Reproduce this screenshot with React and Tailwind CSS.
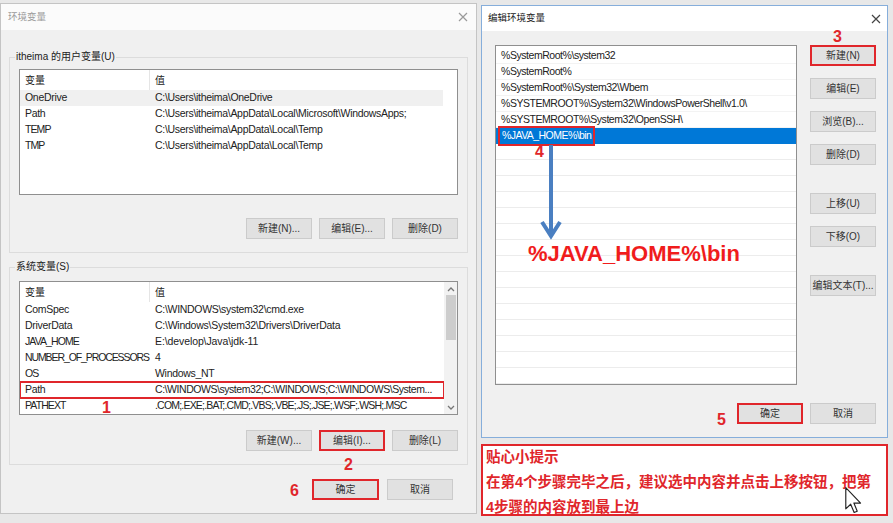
import React from 'react'

const CAPS = 'tracking-[-0.9px]'
const MIXED = 'tracking-[-0.3px]'

const userVars = [
  ['OneDrive', 'C:\\Users\\itheima\\OneDrive', MIXED],
  ['Path', 'C:\\Users\\itheima\\AppData\\Local\\Microsoft\\WindowsApps;', MIXED],
  ['TEMP', 'C:\\Users\\itheima\\AppData\\Local\\Temp', CAPS],
  ['TMP', 'C:\\Users\\itheima\\AppData\\Local\\Temp', CAPS],
]

const sysVars = [
  ['ComSpec', 'C:\\WINDOWS\\system32\\cmd.exe', MIXED, 'tracking-[-0.3px]'],
  ['DriverData', 'C:\\Windows\\System32\\Drivers\\DriverData', MIXED, 'tracking-[-0.25px]'],
  ['JAVA_HOME', 'E:\\develop\\Java\\jdk-11', CAPS, 'tracking-[-0.1px]'],
  ['NUMBER_OF_PROCESSORS', '4', 'tracking-[-1.1px]', ''],
  ['OS', 'Windows_NT', CAPS, 'tracking-[-0.3px]'],
  ['Path', 'C:\\WINDOWS\\system32;C:\\WINDOWS;C:\\WINDOWS\\System...', MIXED, 'tracking-[-0.45px]'],
  ['PATHEXT', '.COM;.EXE;.BAT;.CMD;.VBS;.VBE;.JS;.JSE;.WSF;.WSH;.MSC', CAPS, 'tracking-[-0.8px]'],
]

const pathEntries = [
  '%SystemRoot%\\system32',
  '%SystemRoot%',
  '%SystemRoot%\\System32\\Wbem',
  '%SYSTEMROOT%\\System32\\WindowsPowerShell\\v1.0\\',
  '%SYSTEMROOT%\\System32\\OpenSSH\\',
]

function CloseX({ className = '' }) {
  return (
    <svg width="10" height="10" viewBox="0 0 10 10" className={className}>
      <path d="M1 1L9 9M9 1L1 9" stroke="currentColor" strokeWidth="1.2" />
    </svg>
  )
}

function Btn({ children, red, className = '' }) {
  return (
    <div
      className={`h-[21px] w-[66px] shrink-0 flex items-center justify-center whitespace-nowrap text-[10px] text-[#333] bg-[#e1e1e1] ${
        red ? 'border-2 border-[#e0262b]' : 'border border-[#cbcbcb]'
      } ${className}`}
    >
      {children}
    </div>
  )
}

function Num({ n, className }) {
  return (
    <span className={`absolute text-[16px] leading-[20px] font-bold text-[#e0262b] ${className}`}>{n}</span>
  )
}

function VarHeader() {
  return (
    <div className="flex h-[20px] items-center text-[10px] text-[#222]">
      <div className="w-[130px] pl-[5px] border-r border-[#e5e5e5] h-full flex items-center">变量</div>
      <div className="pl-[5px]">值</div>
    </div>
  )
}

function VarRow({ name, value, nameCls, valueCls = MIXED, hi, boxed }) {
  return (
    <div
      className={`flex h-[16px] items-center text-[10.5px] text-[#222] whitespace-nowrap ${hi ? 'bg-[#f0f0f0]' : ''} ${
        boxed ? 'outline-2 outline-[#e0262b] -outline-offset-1' : ''
      }`}
    >
      <div className={`w-[130px] shrink-0 pl-[5px] overflow-hidden ${nameCls}`}>{name}</div>
      <div className={`pl-[5px] ${valueCls}`}>{value}</div>
    </div>
  )
}

export default function App() {
  return (
    <div className="relative w-[893px] h-[523px] overflow-hidden bg-[#e8e8e8] flex items-start font-['Liberation_Sans','Noto_Sans_CJK_SC',sans-serif]">
      {/* 环境变量 window */}
      <div className="mt-[3px] w-[477px] h-[511px] border border-[#c4c4c4] bg-[#f0f0f0] flex flex-col shrink-0">
        <div className="h-[26px] bg-[#fbfbfb] flex items-center justify-between pl-[7px] pr-[8px]">
          <span className="text-[9.5px] text-[#9a9a9a]">环境变量</span>
          <CloseX className="text-[#9a9a9a]" />
        </div>

        <div className="flex flex-col px-[8px]">
          <fieldset className="min-w-0 mt-[20px] border border-[#dcdcdc] px-[9px] pb-[13px]">
            <legend className="-ml-[4px] px-[1px] text-[10px] leading-[14px] text-[#222]">itheima 的用户变量(U)</legend>
            <div className="mt-[5px] h-[126px] border border-[#8f8f8f] bg-white overflow-hidden">
              <VarHeader />
              <div className="w-[423px]">
                {userVars.map(([n, v, c], i) => (
                  <VarRow key={n + i} name={n} value={v} nameCls={c} hi={i === 0} />
                ))}
              </div>
            </div>
            <div className="mt-[23px] flex justify-end gap-[7px]">
              <Btn>新建(N)...</Btn>
              <Btn>编辑(E)...</Btn>
              <Btn>删除(D)</Btn>
            </div>
          </fieldset>

          <fieldset className="min-w-0 mt-[7px] border border-[#dcdcdc] px-[9px] pb-[13px]">
            <legend className="-ml-[4px] px-[1px] text-[10px] leading-[14px] text-[#222]">系统变量(S)</legend>
            <div className="mt-[7px] h-[134px] border border-[#8f8f8f] bg-white flex">
              <div className="flex-1 min-w-0 overflow-hidden">
                <VarHeader />
                {sysVars.map(([n, v, c, vc]) => (
                  <VarRow key={n} name={n} value={v} nameCls={c} valueCls={vc} boxed={n === 'Path'} />
                ))}
              </div>
              <div className="w-[13px] shrink-0 bg-[#f2f2f2] flex flex-col items-center">
                <svg width="8" height="6" viewBox="0 0 8 6" className="mt-[4px]">
                  <path d="M1 5L4 2L7 5" fill="none" stroke="#777" strokeWidth="1.3" />
                </svg>
                <div className="mt-[3px] w-[10px] h-[45px] bg-[#cdcdcd]" />
                <div className="flex-1" />
                <svg width="8" height="6" viewBox="0 0 8 6" className="mb-[3px]">
                  <path d="M1 1L4 4L7 1" fill="none" stroke="#777" strokeWidth="1.3" />
                </svg>
              </div>
            </div>
            <div className="mt-[15px] flex justify-end gap-[7px]">
              <Btn>新建(W)...</Btn>
              <Btn red>编辑(I)...</Btn>
              <Btn>删除(L)</Btn>
            </div>
          </fieldset>

          <div className="mt-[14px] flex justify-end gap-[8px] pr-[15px]">
            <Btn red className="w-[67px]">确定</Btn>
            <Btn>取消</Btn>
          </div>
        </div>
      </div>

      {/* right column */}
      <div className="ml-[4px] w-[407px] flex flex-col shrink-0">
        <div className="mt-[5px] h-[433px] border border-[#86aedb] bg-[#f0f0f0] flex flex-col">
          <div className="h-[25px] bg-white flex items-center justify-between pl-[6px] pr-[6px]">
            <span className="text-[9.5px] text-[#222]">编辑环境变量</span>
            <CloseX className="text-[#444]" />
          </div>
          <div className="flex pl-[13px] pt-[14px]">
            <div className="w-[302px] h-[340px] pt-[2px] border border-[#8f8f8f] bg-white overflow-hidden">
              {pathEntries.map((p) => (
                <div key={p} className="h-[16px] flex items-center pl-[5px] text-[10.5px] tracking-[-0.45px] text-[#222] whitespace-nowrap border-b border-[#f3f3f3]">
                  {p}
                </div>
              ))}
              <div className="h-[16px] flex items-center pl-[4px] bg-[#0078d7] text-[10.5px] tracking-[-0.55px] text-white">
                <span className="px-[2px] outline-2 outline-[#e0262b]">%JAVA_HOME%\bin</span>
              </div>
              {Array.from({ length: 15 }).map((_, i) => (
                <div key={i} className="h-[16px] border-b border-[#ececec]" />
              ))}
            </div>
            <div className="ml-[13px] flex flex-col gap-[12px]">
              <Btn red>新建(N)</Btn>
              <Btn>编辑(E)</Btn>
              <Btn>浏览(B)...</Btn>
              <Btn>删除(D)</Btn>
              <Btn className="mt-[16px]">上移(U)</Btn>
              <Btn>下移(O)</Btn>
              <Btn className="mt-[16px]">编辑文本(T)...</Btn>
            </div>
          </div>
          <div className="mt-[18px] flex justify-end gap-[7px] pr-[11px]">
            <Btn red>确定</Btn>
            <Btn>取消</Btn>
          </div>
        </div>

        {/* tip box */}
        <div className="mt-[6px] h-[72px] border-2 border-[#e0262b] bg-white px-[3px] text-[14.5px] font-bold text-[#e0262b] leading-[25px] whitespace-nowrap">
          <div className="-mt-[1px]">
            <div>贴心小提示</div>
            <div>在第4个步骤完毕之后，建议选中内容并点击上移按钮，把第</div>
            <div>4步骤的内容放到最上边</div>
          </div>
        </div>
      </div>

      {/* annotations */}
      <Num n="1" className="left-[102px] top-[398px]" />
      <Num n="2" className="left-[344px] top-[455px]" />
      <Num n="3" className="left-[833px] top-[27px]" />
      <Num n="4" className="left-[535px] top-[142px]" />
      <Num n="5" className="left-[717px] top-[410px]" />
      <Num n="6" className="left-[290px] top-[481px]" />

      <svg className="absolute left-[540px] top-[144px]" width="22" height="96" viewBox="0 0 22 96">
        <path d="M11 1V92" stroke="#4a7fc1" strokeWidth="4" />
        <path d="M2 78L11 92L20 78" fill="none" stroke="#4a7fc1" strokeWidth="4" strokeLinejoin="miter" />
      </svg>

      <span className="absolute left-[528px] top-[241px] text-[22px] leading-[26px] font-bold text-[#f01c1c]">%JAVA_HOME%\bin</span>

      <svg className="absolute left-[845px] top-[487px]" width="17" height="27" viewBox="0 0 13 21">
        <path d="M0.5 0.5V17L4.3 13.4L7 19.8L9.4 18.8L6.8 12.5H12Z" fill="#fff" stroke="#222" strokeWidth="0.9" strokeLinejoin="round" />
      </svg>
    </div>
  )
}
